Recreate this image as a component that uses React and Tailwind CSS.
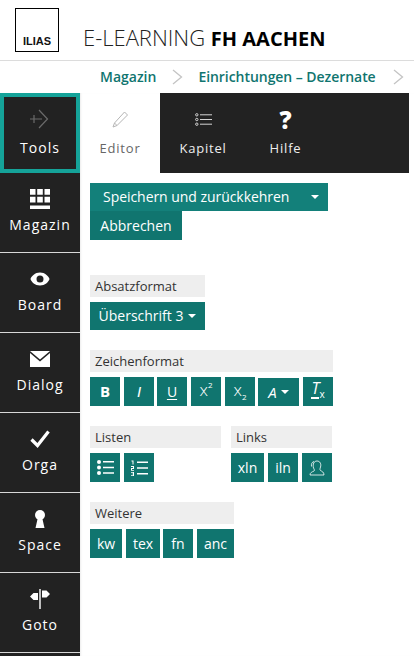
const font = "font-['Open_Sans',sans-serif]";

const GridIcon = () => (
  <svg width="20" height="20" viewBox="0 0 20 20" fill="#fff">
    <path d="M0 0h5.500v5.800H0zM7.200 0h5.600v5.800H7.200zM14.500 0H20v5.800h-5.500zM0 7.700h5.500v5.800H0zM7.200 7.700h5.600v5.800H7.200zM14.500 7.700H20v5.800h-5.500zM0 16.400h20V20H0z" />
  </svg>
);
const EyeIcon = () => (
  <svg width="20" height="14" viewBox="0 0 20 14">
    <path fillRule="evenodd" fill="#fff" d="M10 .5C15 .5 18.500 4 19.500 7 18.500 10 15 13.500 10 13.500S1.500 10 .5 7C1.500 4 5 .5 10 .5zM10 3.500a3.500 3.500 0 100 7 3.500 3.500 0 000-7z" />
  </svg>
);
const MailIcon = () => (
  <svg width="20" height="16" viewBox="0 0 20 16" fill="#fff">
    <path d="M0 0h20L10 8.500z" />
    <path d="M0 2l10 8.500L20 2v14H0z" />
  </svg>
);
const CheckIcon = () => (
  <svg width="20" height="18" viewBox="0 0 20 18" fill="none" stroke="#fff" strokeWidth="3.200">
    <path d="M1.500 9.500l6 6L18.500 1.500" />
  </svg>
);
const KeyholeIcon = () => (
  <svg width="12" height="18" viewBox="0 0 12 18" fill="#fff">
    <circle cx="6" cy="5" r="5" />
    <path d="M4 7h4l2.500 11h-9z" />
  </svg>
);
const SignIcon = () => (
  <svg width="20" height="20" viewBox="0 0 20 20" fill="#fff">
    <path d="M9.300 0h1.400v20H9.300zM12 1.500h4.500L20 5l-3.500 3.500H12zM8 4H3.500L0 7.500 3.500 11H8z" />
  </svg>
);
const ToolsIcon = () => (
  <svg width="20" height="20" viewBox="0 0 20 20" fill="none" stroke="#6b6b6b" strokeWidth="1.200">
    <path d="M9 1l8.500 9L9 19M0 10h12M4 6v8" />
  </svg>
);
const PencilIcon = () => (
  <svg width="17" height="17" viewBox="0 0 17 17" fill="none" stroke="#b5b5b5" strokeWidth="1">
    <path d="M12.500 1l3 3L5 14.500 1 16l1.500-4zM2.500 12L5 14.500" />
  </svg>
);
const ChapterIcon = () => (
  <svg width="17" height="13" viewBox="0 0 17 13" fill="none" stroke="#d4d4d4" strokeWidth="1">
    <circle cx="1.800" cy="1.800" r="1.200" />
    <circle cx="1.800" cy="6.500" r="1.200" />
    <circle cx="1.800" cy="11.200" r="1.200" />
    <path d="M5 1.800h12M5 6.500h12M5 11.200h12" />
  </svg>
);
const Caret = () => (
  <span className="inline-block w-0 h-0 border-x-4 border-x-transparent border-t-4 border-t-white" />
);
const Chevron = () => (
  <svg width="11" height="16" viewBox="0 0 11 16" fill="none" stroke="#c4c4c4" strokeWidth="1.300">
    <path d="M1 1l8.500 7L1 15" />
  </svg>
);

const navItems = [
  ['Magazin', <GridIcon />],
  ['Board', <EyeIcon />],
  ['Dialog', <MailIcon />],
  ['Orga', <CheckIcon />],
  ['Space', <KeyholeIcon />],
  ['Goto', <SignIcon />],
];

const NavItem = ({ label, icon }) => (
  <div className="h-20 shrink-0 border-b border-[#d8d8d8] flex flex-col items-center">
    <div className="h-[52px] w-full flex items-center justify-center">{icon}</div>
    <span className="text-sm leading-[19px] -mt-[10px] font-medium tracking-[1px] text-white">{label}</span>
  </div>
);

const Tab = ({ label, icon, width }) => (
  <div className={`${width} flex flex-col items-center pt-[14px]`}>
    <div className="h-[25px] flex items-center">{icon}</div>
    <span className="mt-[7px] text-[13px] leading-[18px] font-medium tracking-[0.8px] text-[#eee]">{label}</span>
  </div>
);

const Btn = ({ children, className = 'w-[30px]' }) => (
  <div className={`h-[29px] bg-[#10756f] text-white text-sm flex items-center justify-center ${className}`}>
    {children}
  </div>
);

const GroupTitle = ({ children, className }) => (
  <div className={`h-[22px] bg-[#eeeeee] pl-[5px] text-[13px] leading-[22px] text-[#333] ${className}`}>{children}</div>
);

const App = () => (
  <div className={`w-[414px] h-[656px] overflow-hidden bg-white flex flex-col ${font}`}>
    <header className="h-[61px] shrink-0 border-b border-[#dcdcdc] flex pt-[8px] pl-[15px]">
      <div className="w-[44px] h-[44px] border border-black flex items-end justify-center pb-[3px]">
        <span className="font-['Liberation_Sans',sans-serif] font-bold text-[11px] leading-[14px] text-[#111]">ILIAS</span>
      </div>
      <div className="ml-[24px] mt-[15px] text-[22px] leading-[28px] font-light text-[#222] whitespace-nowrap">
        E-LEARNING <span className="text-[20px] font-bold text-black">FH AACHEN</span>
      </div>
    </header>

    <nav className="h-[32px] shrink-0 flex items-center pl-[100px] text-sm font-semibold text-[#10756f] whitespace-nowrap">
      <span>Magazin</span>
      <span className="ml-[16px] mr-[15px] flex"><Chevron /></span>
      <span className="tracking-[-0.05px]">Einrichtungen – Dezernate</span>
      <span className="ml-[17px] flex"><Chevron /></span>
    </nav>

    <div className="flex-1 flex min-h-0">
      <aside className="w-20 shrink-0 bg-[#222222] flex flex-col">
        <div className="h-20 shrink-0 border-4 border-[#15a399] flex flex-col items-center">
          <div className="h-[44px] w-full flex items-center justify-center"><ToolsIcon /></div>
          <span className="text-sm leading-[19px] -mt-[3px] font-medium tracking-[1px] text-white">Tools</span>
        </div>
        {navItems.map(([label, icon]) => (
          <NavItem key={label} label={label} icon={icon} />
        ))}
      </aside>

      <main className="flex-1 min-w-0 flex flex-col shadow-[inset_2px_0_2px_-1px_rgba(0,0,0,0.08)]">
        <div className="h-20 shrink-0 flex mr-[5px]">
          <div className="w-20 flex flex-col items-center pt-[14px]">
            <div className="h-[25px] flex items-center"><PencilIcon /></div>
            <span className="mt-[7px] text-[13px] leading-[18px] font-medium tracking-[0.8px] text-[#666]">Editor</span>
          </div>
          <div className="flex-1 bg-[#222222] flex">
            <Tab label="Kapitel" icon={<ChapterIcon />} width="w-[86px]" />
            <Tab label="Hilfe" width="w-[79px]" icon={<span className="text-[24px] leading-none font-extrabold text-white">?</span>} />
          </div>
        </div>

        <div className="pl-[10px] pt-[10px] flex flex-col items-start">
          <div className="w-[238px] h-[28px] bg-[#13807a] text-white text-sm tracking-[-0.05px] flex items-center pl-[13px] pr-[9px] justify-between">
            <span>Speichern und zurückkehren</span>
            <Caret />
          </div>
          <div className="w-[92px] h-[29px] bg-[#10756f] text-white text-sm flex items-center justify-center">Abbrechen</div>

          <GroupTitle className="w-[115px] mt-[35px]">Absatzformat</GroupTitle>
          <div className="w-[115px] h-[28px] mt-[5px] bg-[#10756f] text-white text-sm flex items-center justify-center gap-[5px]">
            <span>Überschrift 3</span>
            <Caret />
          </div>

          <GroupTitle className="w-[243px] mt-[20px]">Zeichenformat</GroupTitle>
          <div className="mt-[5px] flex items-end gap-[4px]">
            <Btn><span className="font-bold text-[15px]">B</span></Btn>
            <Btn><span className="italic text-[15px] font-['Liberation_Sans',sans-serif]">I</span></Btn>
            <Btn className="w-[30px] -ml-[1px]"><span className="underline underline-offset-2 text-sm">U</span></Btn>
            <Btn><span className="text-[17px] leading-none font-light -mt-[4px]">x<sup className="text-[8px] top-[-8px] font-normal">2</sup></span></Btn>
            <Btn><span className="text-[17px] leading-none font-light -mt-[4px]">x<sub className="text-[8px] bottom-[-4px] font-normal">2</sub></span></Btn>
            <div className="w-[41px] h-[28px] -ml-[1px] bg-[#10756f] text-white text-[15px] italic font-medium flex items-center justify-center gap-[4px]">
              A <Caret />
            </div>
            <Btn><span className="italic text-[16px] border-b-2 border-white leading-[17px] -mt-[4px]">T</span><span className="text-[10px] mt-[6px]">x</span></Btn>
          </div>

          <div className="mt-[20px] flex gap-[10px]">
            <div>
              <GroupTitle className="w-[131px]">Listen</GroupTitle>
              <div className="mt-[5px] flex gap-[4px]">
                <Btn>
                  <svg width="17" height="15" viewBox="0 0 17 15" fill="#fff">
                    <circle cx="2" cy="2" r="2" /><circle cx="2" cy="7.500" r="2" /><circle cx="2" cy="13" r="2" />
                    <path d="M6 1h11v1.500H6zM6 6.700h11v1.500H6zM6 12.300h11v1.500H6z" />
                  </svg>
                </Btn>
                <Btn>
                  <svg width="17" height="16" viewBox="0 0 17 16" fill="#fff">
                    <path d="M.5.500h2v4H1.500v-3h-1zM0 6h3v3H1v1h2v.7H0V8h2V7H0zM0 12h3v4H0v-.7h2v-1H.7v-.6H2v-1H0z" />
                    <path d="M6 1.500h11V3H6zM6 7.200h11v1.500H6zM6 13h11v1.500H6z" />
                  </svg>
                </Btn>
              </div>
            </div>
            <div>
              <GroupTitle className="w-[101px]">Links</GroupTitle>
              <div className="mt-[5px] flex gap-[4px]">
                <Btn className="w-[33px]">xln</Btn>
                <Btn>iln</Btn>
                <Btn>
                  <svg width="16" height="16" viewBox="0 0 16 16" fill="none" stroke="#fff" strokeWidth="0.800">
                    <path d="M1 15c0-2.500 2-3 4-4 1-.5 0-2-.5-3C3.500 4 5 1 8 1s4.500 3 3.500 6c-.4 1.500-1 2.500 0 3.500 1.500 1 3.500 1.500 3.500 4.500z" />
                    <path d="M5 1.500C3 2 2 4 2.500 6.500" />
                  </svg>
                </Btn>
              </div>
            </div>
          </div>

          <GroupTitle className="w-[144px] mt-[20px]">Weitere</GroupTitle>
          <div className="mt-[5px] flex gap-[4px]">
            <Btn className="w-[32px]">kw</Btn>
            <Btn className="w-[34px]">tex</Btn>
            <Btn className="w-[30px] -ml-[1px]">fn</Btn>
            <Btn className="w-[37px]">anc</Btn>
          </div>
        </div>
      </main>
    </div>
  </div>
);

export default App;
